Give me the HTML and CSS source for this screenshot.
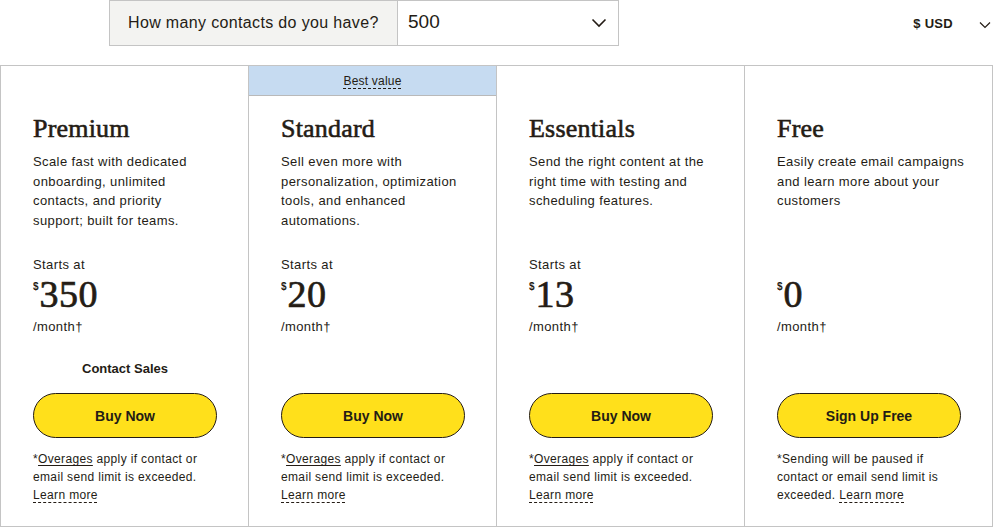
FILE: index.html
```html
<!DOCTYPE html>
<html lang="en">
<head>
<meta charset="utf-8">
<title>Pricing</title>
<link rel="stylesheet" href="styles.css">
</head>
<body>
<div class="topbar">
  <div class="selector">
    <div class="sel-label">How many contacts do you have?</div>
    <div class="sel-value">
      <span>500</span>
      <svg class="chev" width="16" height="10" viewBox="0 0 16 10"><path d="M1.5 1.5 L8 8 L14.5 1.5" fill="none" stroke="#241c15" stroke-width="1.6"/></svg>
    </div>
  </div>
  <div class="currency">
    <span class="cur-text">$ USD</span>
    <svg class="chev-sm" width="12" height="8" viewBox="0 0 12 8"><path d="M1 1.5 L6 6.5 L11 1.5" fill="none" stroke="#241c15" stroke-width="1.2"/></svg>
  </div>
</div>

<div class="plans">
  <div class="plan">
    <div class="badge-slot"></div>
    <div class="plan-body">
      <h2 class="plan-name">Premium</h2>
      <p class="plan-desc">Scale fast with dedicated<br>onboarding, unlimited<br>contacts, and priority<br>support; built for teams.</p>
      <div class="starts">Starts at</div>
      <div class="price"><span class="cur">$</span>350</div>
      <div class="per">/month†</div>
      <div class="contact">Contact Sales</div>
      <a class="btn">Buy Now</a>
      <p class="note">*<span class="ul">Overages</span> apply if contact or email send limit is exceeded. <span class="dotted">Learn more</span></p>
    </div>
  </div>
  <div class="plan">
    <div class="badge-slot badge"><span class="dotted">Best value</span></div>
    <div class="plan-body">
      <h2 class="plan-name">Standard</h2>
      <p class="plan-desc">Sell even more with<br>personalization, optimization<br>tools, and enhanced<br>automations.</p>
      <div class="starts">Starts at</div>
      <div class="price"><span class="cur">$</span>20</div>
      <div class="per">/month†</div>
      <div class="contact"></div>
      <a class="btn">Buy Now</a>
      <p class="note">*<span class="ul">Overages</span> apply if contact or email send limit is exceeded. <span class="dotted">Learn more</span></p>
    </div>
  </div>
  <div class="plan">
    <div class="badge-slot"></div>
    <div class="plan-body">
      <h2 class="plan-name">Essentials</h2>
      <p class="plan-desc">Send the right content at the<br>right time with testing and<br>scheduling features.</p>
      <div class="starts">Starts at</div>
      <div class="price"><span class="cur">$</span>13</div>
      <div class="per">/month†</div>
      <div class="contact"></div>
      <a class="btn">Buy Now</a>
      <p class="note">*<span class="ul">Overages</span> apply if contact or email send limit is exceeded. <span class="dotted">Learn more</span></p>
    </div>
  </div>
  <div class="plan">
    <div class="badge-slot"></div>
    <div class="plan-body">
      <h2 class="plan-name">Free</h2>
      <p class="plan-desc">Easily create email campaigns<br>and learn more about your<br>customers</p>
      <div class="starts"></div>
      <div class="price"><span class="cur">$</span>0</div>
      <div class="per">/month†</div>
      <div class="contact"></div>
      <a class="btn">Sign Up Free</a>
      <p class="note">*Sending will be paused if contact or email send limit is exceeded. <span class="dotted">Learn more</span></p>
    </div>
  </div>
</div>
</body>
</html>
```

FILE: styles.css
```css
* { box-sizing: border-box; }
html, body { margin: 0; padding: 0; background: #fff; }
body {
  font-family: "Liberation Sans", Arial, sans-serif;
  color: #241c15;
  width: 993px;
}

.topbar {
  display: flex;
  align-items: flex-start;
  height: 65px;
}
.selector {
  margin-left: 109px;
  width: 510px;
  height: 46px;
  display: flex;
  border: 1px solid #c4c4c4;
}
.sel-label {
  width: 288px;
  background: #f3f3f1;
  border-right: 1px solid #c4c4c4;
  display: flex;
  align-items: center;
  padding-left: 18px;
  font-size: 16px;
  letter-spacing: 0.35px;
  color: #241c15;
}
.sel-value {
  flex: 1;
  display: flex;
  align-items: center;
  justify-content: space-between;
  padding: 0 11px 0 10px;
  font-size: 19px;
}
.sel-value span { margin-top: -2px; }
.currency {
  margin-left: auto;
  display: flex;
  align-items: center;
  height: 46px;
  padding-right: 2px;
}
.cur-text {
  font-weight: 700;
  font-size: 13px;
  letter-spacing: 0.3px;
  margin-right: 26px;
}
.chev-sm { margin-top: 3px; }

.plans {
  display: grid;
  grid-template-columns: 248px 248px 248px 247px;
  border: 1px solid #c4c4c4;
  width: 993px;
  height: 462px;
}
.plan {
  border-right: 1px solid #c4c4c4;
  display: flex;
  flex-direction: column;
}
.plan:last-child { border-right: none; }
.badge-slot {
  height: 30px;
}
.badge {
  background: #c6dbf1;
  border-bottom: 1px solid #b9b9b9;
  display: flex;
  align-items: center;
  justify-content: center;
  font-size: 12px;
  letter-spacing: 0.2px;
  color: #241c15;
}
.plan-body {
  padding: 18px 31px 0 32px;
  display: flex;
  flex-direction: column;
}
.plan-name {
  margin: 0;
  font-family: "Liberation Serif", "Times New Roman", serif;
  font-weight: 400;
  font-size: 26px;
  line-height: 30px;
  letter-spacing: 0.2px;
  color: #241c15;
  -webkit-text-stroke: 0.6px #241c15;
}
.plan-desc {
  margin: 8px 0 0 0;
  font-size: 13px;
  letter-spacing: 0.4px;
  line-height: 19.5px;
  height: 78px;
  white-space: nowrap;
}
.starts {
  margin-top: 25px;
  font-size: 13px;
  letter-spacing: 0.4px;
  line-height: 19.5px;
  height: 19.5px;
}
.price {
  margin-top: 2px;
  font-family: "Liberation Serif", "Times New Roman", serif;
  font-size: 38px;
  line-height: 34px;
  height: 40px;
  letter-spacing: 0.5px;
  -webkit-text-stroke: 0.7px #241c15;
}
.cur {
  font-family: "Liberation Sans", Arial, sans-serif;
  font-size: 10px;
  font-weight: 700;
  line-height: 0;
  vertical-align: 17px;
  margin-right: 1px;
  -webkit-text-stroke: 0;
  letter-spacing: 0;
}
.per {
  font-size: 13px;
  letter-spacing: 0.4px;
  line-height: 19.5px;
}
.contact {
  margin-top: 23px;
  height: 20px;
  line-height: 20px;
  font-size: 13px;
  font-weight: 700;
  text-align: center;
  color: #241c15;
}
.btn {
  margin-top: 14px;
  height: 45px;
  border-radius: 23px;
  background: #ffe01b;
  border: 1px solid #241c15;
  display: flex;
  align-items: center;
  justify-content: center;
  font-size: 14px;
  font-weight: 700;
  color: #241c15;
}
.note {
  margin: 12px 0 0 0;
  font-size: 12px;
  letter-spacing: 0.35px;
  line-height: 18px;
}
.ul {
  text-decoration: underline;
  text-underline-offset: 2px;
}
.dotted {
  text-decoration: underline dashed;
  text-decoration-thickness: 1px;
  text-underline-offset: 3px;
}
```
